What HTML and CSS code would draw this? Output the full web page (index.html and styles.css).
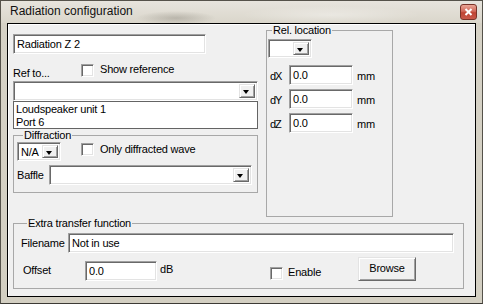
FILE: index.html
```html
<!DOCTYPE html>
<html lang="en">
<head>
<meta charset="utf-8">
<title>Radiation configuration</title>
<meta name="viewport" content="width=device-width,initial-scale=1">
<link rel="stylesheet" href="styles.css">
</head>
<body>

<div class="window">
  <div class="titlebar">
    <span class="title">Radiation configuration</span>
    <button class="close" title="Close" aria-label="Close">
      <svg viewBox="0 0 9 8"><path d="M1.5 1l6 6M7.5 1l-6 6"/></svg>
    </button>
  </div>

  <div class="client">
    <div class="top">
      <div class="left">
        <input class="edit name" value="Radiation Z 2">

        <div class="ref-row">
          <span class="ref-label">Ref to...</span>
          <span class="check"></span>
          <span class="check-text">Show reference</span>
        </div>

        <div class="combo ref-combo"><span class="field"></span><span class="drop"></span></div>

        <div class="list">
          <div>Loudspeaker unit 1</div>
          <div>Port 6</div>
        </div>

        <fieldset class="group diffraction">
          <legend>Diffraction</legend>
          <div class="diff-row">
            <div class="combo small"><span class="field">N/A</span><span class="drop"></span></div>
            <span class="check wide"></span>
            <span class="check-text">Only diffracted wave</span>
          </div>
          <div class="baffle-row">
            <span class="baffle-label">Baffle</span>
            <div class="combo baffle"><span class="field"></span><span class="drop"></span></div>
          </div>
        </fieldset>
      </div>

      <fieldset class="group rel">
        <legend>Rel. location</legend>
        <div class="combo small rel-combo"><span class="field"></span><span class="drop"></span></div>
        <div class="xyz">
          <span class="axis">dX</span><input class="edit coord" value="0.0"><span class="unit">mm</span>
        </div>
        <div class="xyz">
          <span class="axis">dY</span><input class="edit coord" value="0.0"><span class="unit">mm</span>
        </div>
        <div class="xyz">
          <span class="axis">dZ</span><input class="edit coord" value="0.0"><span class="unit">mm</span>
        </div>
      </fieldset>
    </div>

    <fieldset class="group extra">
      <legend>Extra transfer function</legend>
      <div class="file-row">
        <span class="file-label">Filename</span>
        <input class="edit filename" value="Not in use">
      </div>
      <div class="offset-row">
        <span class="offset-label">Offset</span>
        <input class="edit offset" value="0.0">
        <span class="db">dB</span>
        <span class="check enable-box"></span>
        <span class="enable-text">Enable</span>
        <button class="btn">Browse</button>
      </div>
    </fieldset>
  </div>
</div>

</body>
</html>
```

FILE: styles.css
```css
*{box-sizing:border-box}
body{margin:0;font:11px/13px "Liberation Sans",Arial,sans-serif;letter-spacing:-.2px;color:#000;background:#fff}

/* window frame */
.window{width:483px;height:304px;display:flex;flex-direction:column;
  border:1px solid #55524a;border-bottom-color:#3c3a35;
  background:linear-gradient(#e7e4dd,#dad6cb 22px,#d6d2c6 22px,#d3cfc2)}
.titlebar{height:22px;display:flex;align-items:flex-start;
  background:radial-gradient(ellipse 40px 7px at 175px 17px,rgba(120,115,105,.35),transparent),
             radial-gradient(ellipse 90px 9px at 330px 14px,rgba(255,255,255,.35),transparent)}
.title{margin:3px 0 0 9px;font:12px/14px "Liberation Sans",Arial,sans-serif;letter-spacing:0;color:#111}
.close{margin:3px 5px 0 auto;width:17px;height:16px;padding:0;border:1px solid #7a3328;
  border-radius:3px;display:flex;align-items:center;justify-content:center;
  background:linear-gradient(#eba696,#d1685a 45%,#bf4433 55%,#c9594a)}
.close svg{width:9px;height:8px;fill:none;stroke:#fff;stroke-width:2}

.client{margin:0 6px 0 6px;height:274px;border:1px solid #000;background:#f0f0f0;
  box-shadow:inset 1px 1px #fff}

/* common controls */
.edit{font:inherit;letter-spacing:inherit;color:#000;height:20px;padding:0 0 1px 3px;background:#fff;
  border:1px solid;border-color:#a0a0a0 #fff #fff #a0a0a0;
  box-shadow:inset 1px 1px #696969,inset -1px -1px #e3e3e3;outline:none}
.combo{display:flex;height:20px;padding:2px;background:#fff;
  border:1px solid;border-color:#a0a0a0 #fff #fff #a0a0a0;
  box-shadow:inset 1px 1px #696969,inset -1px -1px #e3e3e3}
.combo .field{flex:1;padding-left:1px;line-height:14px}
.drop{width:16px;position:relative;background:#f0f0f0;
  border:1px solid;border-color:#e3e3e3 #696969 #696969 #e3e3e3;
  box-shadow:inset 1px 1px #fff,inset -1px -1px #a0a0a0}
.drop::after{content:"";position:absolute;left:3px;top:5px;
  border:3.5px solid transparent;border-top:4px solid #000;border-bottom:0}
.check{width:13px;height:13px;flex:none;background:#fff;
  border:1px solid;border-color:#a0a0a0 #fff #fff #a0a0a0;
  box-shadow:inset 1px 1px #696969,inset -1px -1px #e3e3e3}
.btn{font:inherit;letter-spacing:inherit;color:#000;padding:0 0 2px;background:#f0f0f0;
  border:1px solid;border-color:#e3e3e3 #696969 #696969 #e3e3e3;
  box-shadow:inset 1px 1px #fff,inset -1px -1px #a0a0a0}
.group{margin:0;padding:0;min-width:0;border:1px solid #a8a8a8}
.group legend{padding:0 1px;margin-left:6px;line-height:13px}

/* top part */
.top{display:flex;align-items:flex-start}
.left{margin-left:5px;width:245px;display:flex;flex-direction:column}
.name{margin-top:10px;width:193px}
.ref-row{display:flex;margin-top:10px;height:17px}
.ref-label{width:68px;margin-top:3px}
.check-text{margin:-1px 0 0 6px}
.list{height:28px;background:#fff;border:1px solid #646464;padding:1px 0 0 2px}

.diffraction{height:64px;padding:0 0 0 3px}
.diff-row{display:flex;align-items:flex-start}
.small{width:44px;height:19px}
.check.wide{margin:1px 0 0 20px}
.diff-row .check-text{margin-top:1px}
.baffle-row{display:flex;align-items:center;margin-top:4px}
.baffle-label{width:32px}
.baffle{width:203px}

.rel{margin-left:8px;width:127px;height:193px;padding:0 0 0 1px}
.rel legend{margin-left:4px}
.rel-combo{margin-top:2px}
.xyz{display:flex;align-items:center;margin-top:4px}
.rel-combo + .xyz{margin-top:7px}
.axis{width:21px;padding-left:2px;letter-spacing:-1px;margin-top:3px}
.coord{width:64px}
.unit{margin:3px 0 0 4px}

/* bottom group */
.extra{margin:0 0 0 5px;width:451px;height:72px;padding:0 0 0 7px}
.file-row{display:flex;align-items:center;margin-top:3px}
.file-label{width:47px}
.filename{width:386px}
.offset-row{display:flex;align-items:flex-end;margin-top:4px;height:24px}
.offset-label{width:64px;padding-left:2px;margin-bottom:4px}
.offset{width:72px}
.db{width:113px;padding-left:3px;margin-bottom:5px}
.enable-box{margin-bottom:1px}
.enable-text{width:75px;padding-left:5px;margin-bottom:2px}
.btn{width:58px;height:24px}
```
